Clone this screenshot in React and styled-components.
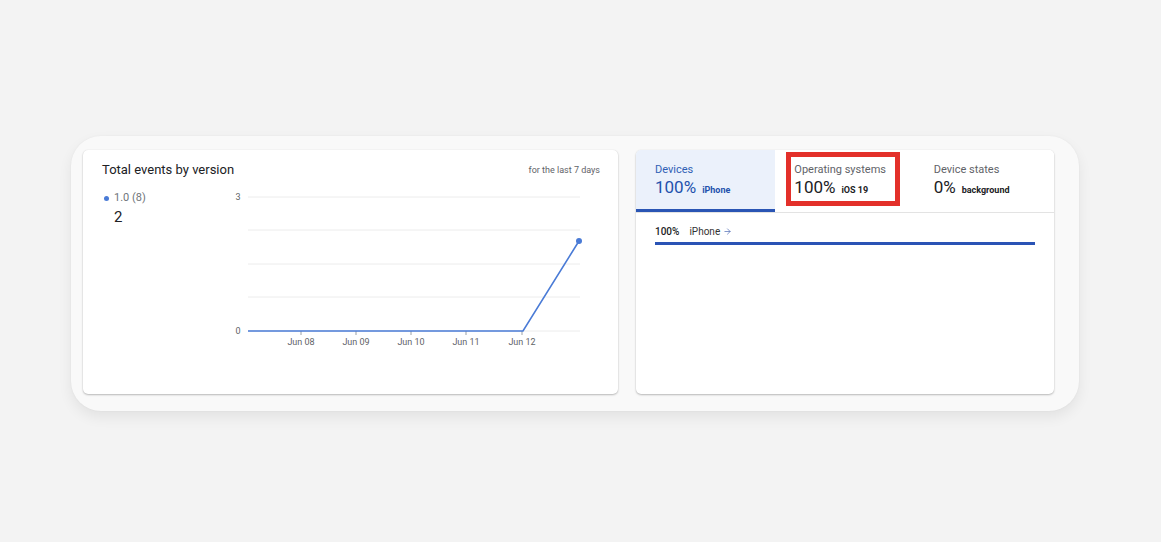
import React from "react";
import styled, { createGlobalStyle } from "styled-components";
import { ArrowRight } from "lucide-react";

const Global = createGlobalStyle`
  html, body { margin:0; padding:0; }
  body {
    background:#f3f3f3;
    font-family: Roboto, "Liberation Sans", Arial, sans-serif;
    color:#202124;
  }
`;

const Page = styled.div`
  width:1161px;
  height:542px;
  padding:136px 0 0 71px;
  box-sizing:border-box;
`;

const Shell = styled.div`
  width:1008px;
  height:275px;
  box-sizing:border-box;
  border-radius:30px;
  background:#f9f9f9;
  box-shadow:0 6px 14px rgba(0,0,0,0.07), 0 0 2px rgba(0,0,0,0.05);
  padding:14px 25px 17px 12px;
  display:grid;
  grid-template-columns:535px 418px;
  column-gap:18px;
`;

const Card = styled.div`
  background:#fff;
  border-radius:5px;
  box-shadow:0 1px 2px rgba(0,0,0,0.25), 0 0 1px rgba(0,0,0,0.12);
  overflow:hidden;
  display:flex;
  flex-direction:column;
`;

const CardHead = styled.div`
  display:flex;
  justify-content:space-between;
  align-items:center;
  padding:12px 18px 0 19px;
  height:16px;
`;

const Title = styled.div`
  font-size:13px;
  line-height:16px;
  color:#202124;
`;

const Period = styled.div`
  font-size:9px;
  color:#5f6368;
`;

const ChartBody = styled.div`
  display:flex;
  padding:10px 0 0 19px;
`;

const Legend = styled.div`
  width:126px;
  display:flex;
  flex-direction:column;
  padding-top:3px;
`;

const LegendRow = styled.div`
  display:flex;
  align-items:center;
  gap:5px;
  font-size:11px;
  line-height:14px;
  color:#70757a;
  margin-left:2px;
`;

const Dot = styled.span`
  width:5px;
  height:5px;
  border-radius:50%;
  background:#4a7bd6;
`;

const LegendValue = styled.div`
  font-size:15px;
  line-height:18px;
  color:#202124;
  margin:3px 0 0 12px;
`;

const Tabs = styled.div`
  display:grid;
  grid-template-columns:repeat(3, 1fr);
  border-bottom:1px solid #e3e3e3;
  height:62px;
`;

const Tab = styled.div`
  position:relative;
  padding:13px 0 0 19px;
  background:${p => (p.$active ? "#ebf1fb" : "#fff")};
  border-bottom:3px solid ${p => (p.$active ? "#2a55b4" : "transparent")};
  color:${p => (p.$active ? "#2351ad" : "#202124")};
`;

const TabLabel = styled.div`
  font-size:11px;
  line-height:14px;
  color:${p => (p.$active ? "#2f5fb5" : "#5f6368")};
`;

const TabValue = styled.div`
  display:flex;
  align-items:baseline;
  gap:6px;
  line-height:20px;
`;

const Big = styled.span`
  font-size:17px;
`;

const Small = styled.span`
  font-size:9px;
  font-weight:700;
`;

const Highlight = styled.div`
  position:absolute;
  left:11px;
  top:2px;
  width:114px;
  height:54px;
  box-sizing:border-box;
  border:5px solid #e3302a;
  pointer-events:none;
`;

const Breakdown = styled.div`
  padding:12px 19px 0 19px;
`;

const BreakRow = styled.div`
  display:flex;
  align-items:center;
  gap:10px;
  font-size:10px;
  line-height:13px;
  color:#333;
`;

const Pct = styled.span`
  font-weight:500;
  color:#202124;
`;

const Arrow = styled.span`
  display:flex;
  color:#5a74b8;
  margin-left:-7px;
`;

const Bar = styled.div`
  margin-top:4px;
  height:3px;
  background:#2a53b5;
`;

const grid = [9, 42, 76, 109, 143];
const ticks = [
  { x: 73, l: "Jun 08" },
  { x: 128, l: "Jun 09" },
  { x: 183, l: "Jun 10" },
  { x: 238, l: "Jun 11" },
  { x: 294, l: "Jun 12" },
];

function Chart() {
  return (
    <svg width="372" height="162" viewBox="0 0 372 162">
      {grid.map(y => (
        <line key={y} x1="20" x2="352" y1={y} y2={y} stroke="#ececec" strokeWidth="1" />
      ))}
      <text x="10" y="12" fontSize="9" fill="#5f6368" textAnchor="middle" fontFamily="Roboto, sans-serif">3</text>
      <text x="10" y="146" fontSize="9" fill="#5f6368" textAnchor="middle" fontFamily="Roboto, sans-serif">0</text>
      {ticks.map(t => (
        <g key={t.l}>
          <line x1={t.x} x2={t.x} y1="143" y2="147" stroke="#9aa0a6" strokeWidth="1" />
          <text x={t.x} y="157" fontSize="9" fill="#5f6368" textAnchor="middle" fontFamily="Roboto, sans-serif">{t.l}</text>
        </g>
      ))}
      <polyline points="20,143 295,143 351,53" fill="none" stroke="#4a7bd6" strokeWidth="1.6" />
      <circle cx="351" cy="53" r="3" fill="#4a7bd6" />
    </svg>
  );
}

export default function App() {
  return (
    <>
      <Global />
      <Page>
        <Shell>
          <Card>
            <CardHead>
              <Title>Total events by version</Title>
              <Period>for the last 7 days</Period>
            </CardHead>
            <ChartBody>
              <Legend>
                <LegendRow><Dot />1.0 (8)</LegendRow>
                <LegendValue>2</LegendValue>
              </Legend>
              <Chart />
            </ChartBody>
          </Card>
          <Card>
            <Tabs>
              <Tab $active>
                <TabLabel $active>Devices</TabLabel>
                <TabValue><Big>100%</Big><Small>iPhone</Small></TabValue>
              </Tab>
              <Tab>
                <TabLabel>Operating systems</TabLabel>
                <TabValue><Big>100%</Big><Small>iOS 19</Small></TabValue>
                <Highlight />
              </Tab>
              <Tab>
                <TabLabel>Device states</TabLabel>
                <TabValue><Big>0%</Big><Small>background</Small></TabValue>
              </Tab>
            </Tabs>
            <Breakdown>
              <BreakRow>
                <Pct>100%</Pct>
                <span>iPhone</span>
                <Arrow><ArrowRight size={9} strokeWidth={2} /></Arrow>
              </BreakRow>
              <Bar />
            </Breakdown>
          </Card>
        </Shell>
      </Page>
    </>
  );
}
